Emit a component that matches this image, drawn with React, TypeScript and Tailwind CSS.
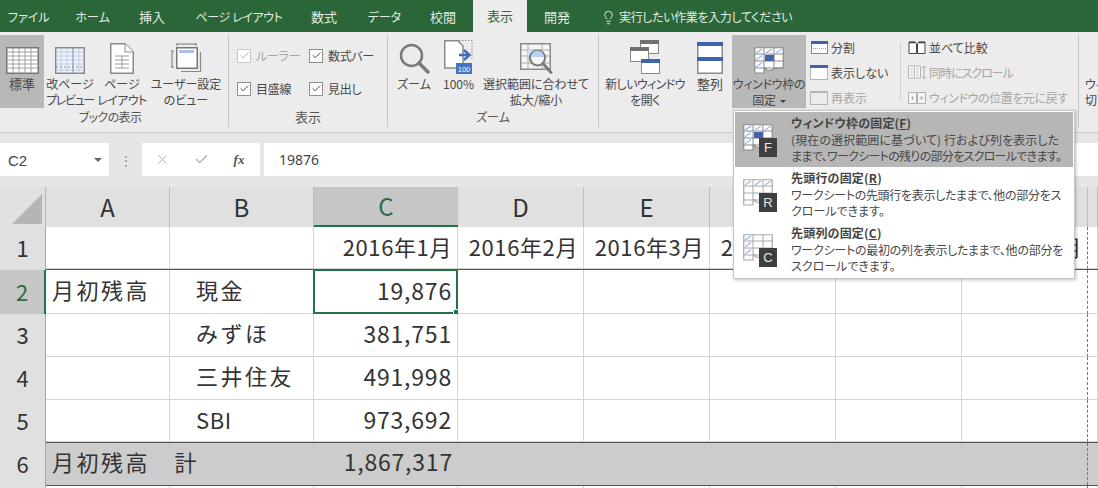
import type { ReactNode } from 'react';
import { Check, Lightbulb, X } from 'lucide-react';

const uiFont = "font-['Noto_Sans_CJK_JP',sans-serif] [font-feature-settings:'palt']";

const tabs = [
  { label: 'ファイル', w: 'w-[37px]', size: 'text-[12px]' },
  { label: 'ホーム', w: 'w-[33px]', size: 'text-[12px]' },
  { label: '挿入', w: 'w-[26px]', size: 'text-[13px]' },
  { label: 'ページ レイアウト', w: 'w-[85px]', size: 'text-[12px] tracking-[-0.4px]' },
  { label: '数式', w: 'w-[26px]', size: 'text-[13px]' },
  { label: 'データ', w: 'w-[32px]', size: 'text-[12px]' },
  { label: '校閲', w: 'w-[25px]', size: 'text-[13px]' },
];

const NormalIcon = () => (
  <svg width="33" height="27" viewBox="0 0 33 27">
    <rect x="0.75" y="0.75" width="31.5" height="25.5" fill="#fff" stroke="#777" strokeWidth="1.5" />
    {[7, 13, 19, 25].map((x) => <line key={x} x1={x} x2={x} y1="1" y2="26" stroke="#a0a0a0" />)}
    {[5, 9, 13, 17, 21].map((y) => <line key={y} y1={y} y2={y} x1="1" x2="32" stroke="#a0a0a0" />)}
  </svg>
);

const PageBreakIcon = () => (
  <svg width="30" height="27" viewBox="0 0 30 27">
    <rect x="0.75" y="0.75" width="28.5" height="25.5" fill="#eef2fb" stroke="#8a8a8a" strokeWidth="1.5" />
    {[5, 9, 13, 17, 23].map((y) => <line key={y} x1="1" x2="29" y1={y} y2={y} stroke="#bccdea" />)}
    {[6, 12, 24].map((x) => <line key={x} x1={x} x2={x} y1="1" y2="26" stroke="#bccdea" />)}
    <line x1="18" x2="18" y1="1" y2="26" stroke="#8a8a8a" />
    <line x1="1" x2="29" y1="20" y2="20" stroke="#888" strokeDasharray="2 2" />
  </svg>
);

const PageLayoutIcon = () => (
  <svg width="24" height="31" viewBox="0 0 24 31">
    <path d="M0.75 0.75H15L23.25 9V30.25H0.75Z" fill="#fff" stroke="#8a8a8a" strokeWidth="1.5" />
    <path d="M15 0.75V9H23.25" fill="#fff" stroke="#8a8a8a" />
    {[13, 17, 21, 25].map((y) => <line key={y} x1="5" x2="19" y1={y} y2={y} stroke="#9a9a9a" />)}
    <line x1="12" x2="12" y1="13" y2="25" stroke="#9a9a9a" />
  </svg>
);

const CustomViewIcon = () => (
  <svg width="31" height="31" viewBox="0 0 31 31">
    <path d="M1 8V24M0 8H3M0 24H3M6 1H25M6 0V3M25 0V3" stroke="#777" fill="none" />
    <path d="M10 28.5H29.5V9" stroke="#8a8a8a" fill="none" strokeWidth="1.2" />
    <rect x="5.75" y="4.75" width="20.5" height="20.5" fill="#fff" stroke="#777" strokeWidth="1.5" />
    <rect x="8" y="7" width="15" height="3" fill="#a9bfe6" />
  </svg>
);

const Magnifier = () => (
  <svg width="31" height="31" viewBox="0 0 31 31">
    <circle cx="12.5" cy="12.5" r="10.5" fill="none" stroke="#7a7a7a" strokeWidth="2.5" />
    <line x1="20" y1="20" x2="29" y2="29" stroke="#7a7a7a" strokeWidth="3.5" strokeLinecap="round" />
  </svg>
);

const HundredIcon = () => (
  <svg width="29" height="34" viewBox="0 0 29 34">
    <path d="M0.75 0.75H14L19 6V28H0.75Z" fill="#fff" stroke="#8a8a8a" strokeWidth="1.5" />
    <path d="M15 0.5H28V20" fill="none" stroke="#8a8a8a" strokeDasharray="1.5 1.5" />
    <path d="M15 15H25M20 10L25.5 15L20 20" fill="none" stroke="#3f6cb5" strokeWidth="2.4" />
    <rect x="12" y="23" width="16" height="11" fill="#4472c4" />
    <text x="20" y="31.5" textAnchor="middle" fontSize="7.5" fill="#fff" fontFamily="Liberation Sans">100</text>
  </svg>
);

const SelectionZoomIcon = () => (
  <svg width="33" height="31" viewBox="0 0 33 31">
    <rect x="0.75" y="0.75" width="29.5" height="25.5" fill="#f5f5f5" stroke="#8a8a8a" strokeWidth="1.5" />
    {[8, 22].map((x) => <line key={x} x1={x} x2={x} y1="1" y2="26" stroke="#aaa" />)}
    {[7, 13, 20].map((y) => <line key={y} x1="1" x2="30" y1={y} y2={y} stroke="#aaa" />)}
    <rect x="8" y="7" width="14" height="6" fill="#cfe0f5" />
    <circle cx="17.5" cy="15" r="7.5" fill="#f4f4f4" stroke="#777" strokeWidth="2" />
    <path d="M11 14A6.5 6.5 0 0 1 24 14Z" fill="#b9d1ee" />
    <line x1="23" y1="20.5" x2="31" y2="29.5" stroke="#777" strokeWidth="2.8" strokeLinecap="round" />
  </svg>
);

const NewWindowIcon = () => (
  <svg width="30" height="34" viewBox="0 0 30 34">
    <rect x="10.5" y="0.5" width="18" height="13" fill="#fff" stroke="#8a8a8a" />
    <rect x="10" y="0" width="19" height="4" fill="#707070" />
    <rect x="0.5" y="7.5" width="18" height="14" fill="#fff" stroke="#8a8a8a" />
    <rect x="0" y="7" width="19" height="4" fill="#707070" />
    <rect x="11.5" y="19.5" width="18" height="14" fill="#fff" stroke="#8a8a8a" />
    <rect x="11" y="19" width="19" height="4" fill="#3f64ad" />
  </svg>
);

const ArrangeIcon = () => (
  <svg width="26" height="32" viewBox="0 0 26 32">
    <rect x="0.75" y="0.75" width="24.5" height="30.5" fill="#fff" stroke="#8a8a8a" strokeWidth="1.5" />
    <rect x="0" y="0" width="26" height="4" fill="#3f64ad" />
    <rect x="0" y="15" width="26" height="4" fill="#3f64ad" />
  </svg>
);

const FreezeIcon = ({ hi = 'both', mark = true, soft = false }: { hi?: 'both' | 'row' | 'col'; mark?: boolean; soft?: boolean }) => {
  const line = soft ? '#a8a8a8' : '#8a8a8a';
  return (
    <svg width="30" height="27" viewBox="0 0 30 27">
      <path d="M0.75 26V0.75H29.25V21H21Q17 25 12 22.5V21H10V26Z" fill="#fff" stroke={line} strokeWidth="1.2" />
      {[10, 20].map((x) => <line key={x} x1={x} x2={x} y1="1" y2="21" stroke={line} />)}
      {[7, 14, 21].map((y) => <line key={y} x1="1" x2="29" y1={y} y2={y} stroke={line} />)}
      {hi !== 'col' && <path d="M2 6L8 2M12 6L18 2M22 6L28 2" stroke="#9dbbe6" strokeWidth="1.3" />}
      {hi !== 'row' && <path d="M2 6L8 2M2 13L8 8.5M2 20L8 15.5" stroke="#9dbbe6" strokeWidth="1.3" />}
      {mark && <rect x="11" y="8" width="9" height="6" fill="#3f64ad" />}
    </svg>
  );
};

const SplitIcon = () => (
  <svg width="17" height="13" viewBox="0 0 17 13">
    <rect x="0.5" y="0.5" width="16" height="12" fill="#fff" stroke="#8a8a8a" />
    <rect x="0" y="0" width="17" height="3" fill="#3f64ad" />
    <line x1="2" x2="15" y1="7.5" y2="7.5" stroke="#8fa8d8" strokeDasharray="1 1" />
  </svg>
);

const HideIcon = () => (
  <svg width="18" height="15" viewBox="0 0 18 15">
    <rect x="0.5" y="0.5" width="17" height="14" fill="#fff" stroke="#777" strokeDasharray="1 1" />
    <rect x="0" y="0" width="18" height="3" fill="#3f64ad" />
  </svg>
);

const UnhideIcon = () => (
  <svg width="18" height="14" viewBox="0 0 18 14">
    <rect x="0.5" y="0.5" width="17" height="13" fill="none" stroke="#b5b5b5" />
    <rect x="0" y="0" width="18" height="2" fill="#b5b5b5" />
  </svg>
);

const CompareIcon = () => (
  <svg width="18" height="14" viewBox="0 0 18 14">
    <path d="M1 12.5V1H7L8.5 2.5V12.5ZM9.5 12.5V2.5L11 1H17V12.5Z" fill="#fff" stroke="#444" />
    <path d="M1 1.5H7.5M10.5 1.5H17" stroke="#444" strokeWidth="1.4" />
  </svg>
);

const SyncIcon = () => (
  <svg width="18" height="15" viewBox="0 0 18 15">
    <path d="M0.5 13V1H6.5V13ZM6.5 13V1H12.5V13Z" fill="#f6f6f6" stroke="#b5b5b5" />
    <path d="M2 4H5M2 7H5M2 10H5M8 4H11M8 7H11M8 10H11" stroke="#c4c4c4" />
    <path d="M16 1V14M14.5 3L16 1L17.5 3M14.5 12L16 14L17.5 12" stroke="#b0b0b0" fill="none" />
  </svg>
);

const ResetIcon = () => (
  <svg width="18" height="14" viewBox="0 0 18 14">
    <path d="M0.5 12.5V1.5H8.5V12.5ZM9.5 12.5V1.5H17.5V12.5Z" fill="#f6f6f6" stroke="#b0b0b0" />
    <path d="M3 7H6M4.5 5V9M11.5 7H15.5M13.5 5V9" stroke="#b0b0b0" />
  </svg>
);

const LargeButton = ({ icon, label, w, active, className = '', labelClass = 'text-[12px]' }: { icon: ReactNode; label: ReactNode; w: string; active?: boolean; className?: string; labelClass?: string }) => (
  <div className={`flex h-[73px] shrink-0 flex-col items-center ${w} ${active ? 'bg-[#b8b8b8]' : ''} ${className}`}>
    <div className="flex h-[39px] items-end justify-center">{icon}</div>
    <div className={`mt-[2px] text-center leading-[16px] whitespace-nowrap text-[#484848] ${labelClass}`}>{label}</div>
  </div>
);

const Group = ({ label, w, labelClass = 'text-[12px]', children }: { label: string; w: string; labelClass?: string; children: ReactNode }) => (
  <div className={`flex h-[92px] shrink-0 flex-col border-r border-[#c6c6c6] ${w}`}>
    <div className="flex h-[73px]">{children}</div>
    <div className={`mt-[1px] text-center leading-[16px] text-[#555] ${labelClass}`}>{label}</div>
  </div>
);

const CheckOption = ({ label, muted }: { label: string; muted?: boolean }) => (
  <div className="flex h-[33px] w-[72px] shrink-0 items-center gap-[5px] whitespace-nowrap">
    <div className={`flex h-[14px] w-[14px] items-center justify-center border bg-white ${muted ? 'border-[#c6c6c6]' : 'border-[#8f8f8f]'}`}>
      <Check size={11} strokeWidth={2} color={muted ? '#b0b0b0' : '#444'} />
    </div>
    <span className={`text-[12px] tracking-[-0.3px] ${muted ? 'text-[#a6a6a6]' : 'text-[#484848]'}`}>{label}</span>
  </div>
);

const SmallRow = ({ icon, label, muted, labelClass = '' }: { icon: ReactNode; label: string; muted?: boolean; labelClass?: string }) => (
  <div className="flex h-[25px] items-center gap-[3px] whitespace-nowrap">
    <div className="flex w-[18px] shrink-0 justify-center">{icon}</div>
    <span className={`text-[12px] ${muted ? 'text-[#a6a6a6]' : 'text-[#484848]'} ${labelClass}`}>{label}</span>
  </div>
);

const months = ['2016年1月', '2016年2月', '2016年3月', '2016年4月', '2016年5月', '2016年6月'];
const colNames = ['A', 'B', 'C', 'D', 'E', 'F', 'G', 'H', ''];
const widths = ['w-[124px]', 'w-[144px]', 'w-[144px]', 'w-[126px]', 'w-[126px]', 'w-[126px]', 'w-[126px]', 'w-[126px]', 'flex-1'];

const sheetRows: { no: number; h: string; a?: string; b?: string; c?: string }[] = [
  { no: 1, h: 'h-[43px]' },
  { no: 2, h: 'h-[44px]', a: '月初残高', b: '現金', c: '19,876' },
  { no: 3, h: 'h-[43px]', b: 'みずほ', c: '381,751' },
  { no: 4, h: 'h-[43px]', b: '三井住友', c: '491,998' },
  { no: 5, h: 'h-[43px]', b: 'SBI', c: '973,692' },
  { no: 6, h: 'h-[43px]', a: '月初残高　計', c: '1,867,317' },
  { no: 7, h: 'h-[43px]' },
];

const cellSpacing = (rowNo: number, right: boolean, text?: string) => {
  if (rowNo === 1) return 'text-[22px] tracking-[0.6px] pb-[2px]';
  if (right) return `text-[23px] tracking-[0.8px] ${rowNo === 6 ? 'pb-[5px]' : 'pb-[3px]'}`;
  if (text === 'SBI') return 'text-[22px] tracking-[0.6px] pb-[3px]';
  return `text-[22px] tracking-[2.5px] ${rowNo === 6 ? 'pb-[6px]' : 'pb-[5px]'}`;
};

const MenuItem = ({ icon, keyName, title, lines, active }: { icon: ReactNode; keyName: string; title: string; lines: { text: string; cls: string }[]; active?: boolean }) => (
  <div className={`flex h-[55px] ${active ? 'bg-[#b6b6b6]' : ''}`}>
    <div className="relative ml-[8px] mt-[12px] h-[33px] w-[34px] shrink-0">
      {icon}
      <div className="absolute bottom-0 right-0 flex h-[19px] w-[18px] items-center justify-center bg-[#3f3f3f] font-['Liberation_Sans',sans-serif] text-[13px] leading-none text-[#e8e8e8]">{keyName}</div>
    </div>
    <div className="ml-[14px] pt-[1px] whitespace-nowrap">
      <div className="text-[12px] leading-[19px] font-bold tracking-[0.2px] text-[#444]">
        {title}(<span className="underline">{keyName}</span>)
      </div>
      {lines.map((line) => (
        <div key={line.text} className={`text-[12px] leading-[16px] text-[#484848] ${line.cls}`}>{line.text}</div>
      ))}
    </div>
  </div>
);

export default function App() {
  return (
    <div className={`relative h-[488px] w-[1098px] overflow-hidden bg-white ${uiFont}`}>
      {/* title tabs */}
      <div className="flex h-[32px] items-end bg-[#2a6637] pl-[8px] text-[#e3ece5]">
        <div className="flex h-[30px] items-center gap-[30.5px]">
          {tabs.map((tab) => (
            <div key={tab.label} className={`${tab.w} ${tab.size} shrink-0 whitespace-nowrap`}>{tab.label}</div>
          ))}
        </div>
        <div className="ml-[18px] flex h-[32px] w-[54px] items-center justify-center bg-[#ececec] text-[13px] text-[#2a6637]">表示</div>
        <div className="ml-[17px] flex h-[30px] w-[26px] shrink-0 items-center text-[13px]">開発</div>
        <div className="ml-[31px] flex h-[30px] items-center gap-[3px] text-[12px] tracking-[-0.35px]">
          <Lightbulb size={15} strokeWidth={1.5} />
          <span>実行したい作業を入力してください</span>
        </div>
      </div>

      {/* ribbon */}
      <div className="flex h-[101px] overflow-hidden border-b border-[#c9c9c9] bg-[#ececec] pt-[3px]">
        <Group label="ブックの表示" w="w-[229px]" labelClass="text-[12px] tracking-[-0.6px] pr-[8px]">
          <LargeButton w="w-[44px]" active icon={<NormalIcon />} label="標準" labelClass="text-[13px]" />
          <LargeButton w="w-[52px]" icon={<PageBreakIcon />} label={<>改ページ<br /><span className="tracking-[-1.4px]">プレビュー</span></>} />
          <LargeButton w="w-[52px]" icon={<PageLayoutIcon />} label={<>ページ<br /><span className="tracking-[-0.6px]">レイアウト</span></>} />
          <LargeButton w="w-[76px]" icon={<CustomViewIcon />} label={<>ユーザー設定<br />のビュー</>} />
        </Group>
        <Group label="表示" w="w-[159px]" labelClass="text-[13px]">
          <div className="pl-[8px] pt-[4px]">
            <div className="flex"><CheckOption label="ルーラー" muted /><CheckOption label="数式バー" /></div>
            <div className="flex"><CheckOption label="目盛線" /><CheckOption label="見出し" /></div>
          </div>
        </Group>
        <Group label="ズーム" w="w-[211px]">
          <LargeButton w="w-[44px]" className="ml-[4px]" icon={<Magnifier />} label="ズーム" />
          <LargeButton w="w-[45px]" icon={<HundredIcon />} label="100%" />
          <LargeButton w="w-[110px]" icon={<SelectionZoomIcon />} label={<>選択範囲に合わせて<br />拡大/縮小</>} />
        </Group>
        <div className="flex h-[92px] w-[480px] shrink-0 border-r border-[#c6c6c6]">
          <LargeButton w="w-[80px]" className="ml-[6px]" labelClass="text-[12px] tracking-[-0.6px]" icon={<NewWindowIcon />} label={<>新しいウィンドウ<br />を開く</>} />
          <LargeButton w="w-[40px]" className="ml-[5px]" labelClass="text-[13px]" icon={<ArrangeIcon />} label="整列" />
          <LargeButton
            w="w-[74px]"
            active
            className="ml-[2px]"
            labelClass="text-[12px] tracking-[-0.3px]"
            icon={<FreezeIcon />}
            label={
              <>
                ウィンドウ枠の
                <br />
                固定
                <span className="ml-[4px] inline-block h-0 w-0 border-x-[3px] border-t-[3px] border-x-transparent border-t-[#444] align-middle" />
              </>
            }
          />
          <div className="ml-[4px] h-[75px] w-[90px] shrink-0">
            <SmallRow icon={<SplitIcon />} label="分割" />
            <SmallRow icon={<HideIcon />} label="表示しない" />
            <SmallRow icon={<UnhideIcon />} label="再表示" muted />
          </div>
          <div className="mt-[7px] h-[58px] border-l border-[#d0d0d0]" />
          <div className="ml-[7px] h-[75px]">
            <SmallRow icon={<CompareIcon />} label="並べて比較" />
            <SmallRow icon={<SyncIcon />} label="同時にスクロール" muted labelClass="tracking-[-1px]" />
            <SmallRow icon={<ResetIcon />} label="ウィンドウの位置を元に戻す" muted labelClass="tracking-[-0.4px]" />
          </div>
        </div>
        <div className="ml-[6px] shrink-0 pt-[39px] text-[12px] leading-[16px] text-[#484848]">
          <div className="pt-[2px]">ウィンドウの</div>
          <div>切り替え</div>
        </div>
      </div>

      {/* formula bar */}
      <div className="flex h-[54px] bg-[#e6e6e6] pt-[10px]">
        <div className="flex h-[33px] w-[109px] items-center justify-between bg-white pl-[8px] pr-[7px] font-['Liberation_Sans',sans-serif] text-[15px] text-[#444]">
          <span className="pt-[3px]">C2</span>
          <div className="h-0 w-0 border-x-[4px] border-t-[4px] border-x-transparent border-t-[#666]" />
        </div>
        <div className="flex h-[33px] w-[33px] items-center justify-center text-[14px] leading-none text-[#999]">⋮</div>
        <div className="flex h-[33px] w-[118px] items-center bg-white text-[#aaa]">
          <div className="flex w-[40px] justify-center"><X size={15} strokeWidth={1.5} /></div>
          <div className="flex w-[38px] justify-center"><Check size={15} strokeWidth={2} /></div>
          <div className="flex w-[38px] justify-center font-['Liberation_Serif',serif] text-[13px] font-bold text-[#555] italic">fx</div>
        </div>
        <div className="ml-[4px] flex h-[33px] flex-1 items-center bg-white pl-[15px] font-['Noto_Sans',sans-serif] text-[14px] text-[#444]">19876</div>
      </div>

      {/* sheet */}
      <div className="font-['Noto_Sans_CJK_JP',sans-serif] text-[#333] [font-feature-settings:normal]">
        <div className="flex h-[40px] bg-[#e0e0e0]">
          <div className="flex w-[46px] shrink-0 items-end justify-end border-r border-[#b5b5b5] pb-[3px] pr-[3px]">
            <div className="h-0 w-0 border-b-[30px] border-l-[30px] border-b-[#b4b4b4] border-l-transparent" />
          </div>
          {colNames.map((name, i) => (
            <div
              key={name || 'blank'}
              className={`flex items-center justify-center text-[24px] ${widths[i]} ${name === 'C' ? 'border-b-2 border-[#217346] bg-[#c6c6c6] text-[#2f6b43]' : 'border-r border-[#bdbdbd]'}`}
            >
              {name}
            </div>
          ))}
        </div>
        {sheetRows.map((row) => (
          <div key={row.no} className={`flex ${row.h} ${row.no === 1 || row.no === 5 ? 'border-b-[1.5px] border-[#555]' : ''} ${row.no === 6 ? 'border-b-[1.5px] border-[#555] bg-[#cccccc]' : ''}`}>
            <div className={`-mb-[2px] flex w-[46px] shrink-0 items-center justify-center border-r pb-[4px] text-[22px] ${row.no === 2 ? 'border-r-2 border-[#217346] bg-[#c6c6c6] text-[#2f6b43]' : 'border-[#a8a8a8] bg-[#e0e0e0]'}`}>
              {row.no}
            </div>
            {colNames.map((name, i) => {
              const borders = row.no === 6 ? '' : 'border-b border-r border-[#d4d4d4]';
              const dashed = name === 'H' ? 'border-r border-r-[#777] [border-right-style:dashed]' : '';
              let text: string | undefined;
              if (name === 'A') text = row.a;
              if (name === 'B') text = row.b;
              if (name === 'C') text = row.c;
              if (row.no === 1 && i >= 2 && i <= 7) text = months[i - 2];
              const right = i >= 2;
              return (
                <div
                  key={name || 'blank'}
                  className={`relative flex items-center whitespace-nowrap ${widths[i]} ${borders} ${dashed} ${right ? 'justify-end pr-[5px]' : name === 'A' ? 'pl-[6px]' : 'pl-[26px]'} ${cellSpacing(row.no, right, text)}`}
                >
                  {text}
                  {row.no === 2 && name === 'C' && (
                    <div className="absolute -left-[1px] -top-[1px] bottom-[-1px] right-[-1px] border-2 border-[#217346]">
                      <div className="absolute -bottom-[3px] -right-[3px] h-[6px] w-[6px] border border-white bg-[#217346]" />
                    </div>
                  )}
                </div>
              );
            })}
          </div>
        ))}
      </div>

      {/* freeze panes menu */}
      <div className={`absolute left-[733px] top-[110px] h-[169px] w-[342px] border border-[#c6c6c6] bg-white p-[1px] shadow-[1px_1px_3px_rgba(0,0,0,0.25)] ${uiFont}`}>
        <MenuItem
          active
          keyName="F"
          title="ウィンドウ枠の固定"
          icon={<FreezeIcon />}
          lines={[
            { text: '(現在の選択範囲に基づいて) 行および列を表示した', cls: 'tracking-[0.1px]' },
            { text: 'ままで、ワークシートの残りの部分をスクロールできます。', cls: 'tracking-[-0.7px]' },
          ]}
        />
        <MenuItem
          keyName="R"
          title="先頭行の固定"
          icon={<FreezeIcon hi="row" mark={false} soft />}
          lines={[
            { text: 'ワークシートの先頭行を表示したままで、他の部分をス', cls: 'tracking-[-0.3px]' },
            { text: 'クロールできます。', cls: '' },
          ]}
        />
        <MenuItem
          keyName="C"
          title="先頭列の固定"
          icon={<FreezeIcon hi="col" mark={false} soft />}
          lines={[
            { text: 'ワークシートの最初の列を表示したままで、他の部分を', cls: 'tracking-[-0.25px]' },
            { text: 'スクロールできます。', cls: '' },
          ]}
        />
      </div>
    </div>
  );
}
